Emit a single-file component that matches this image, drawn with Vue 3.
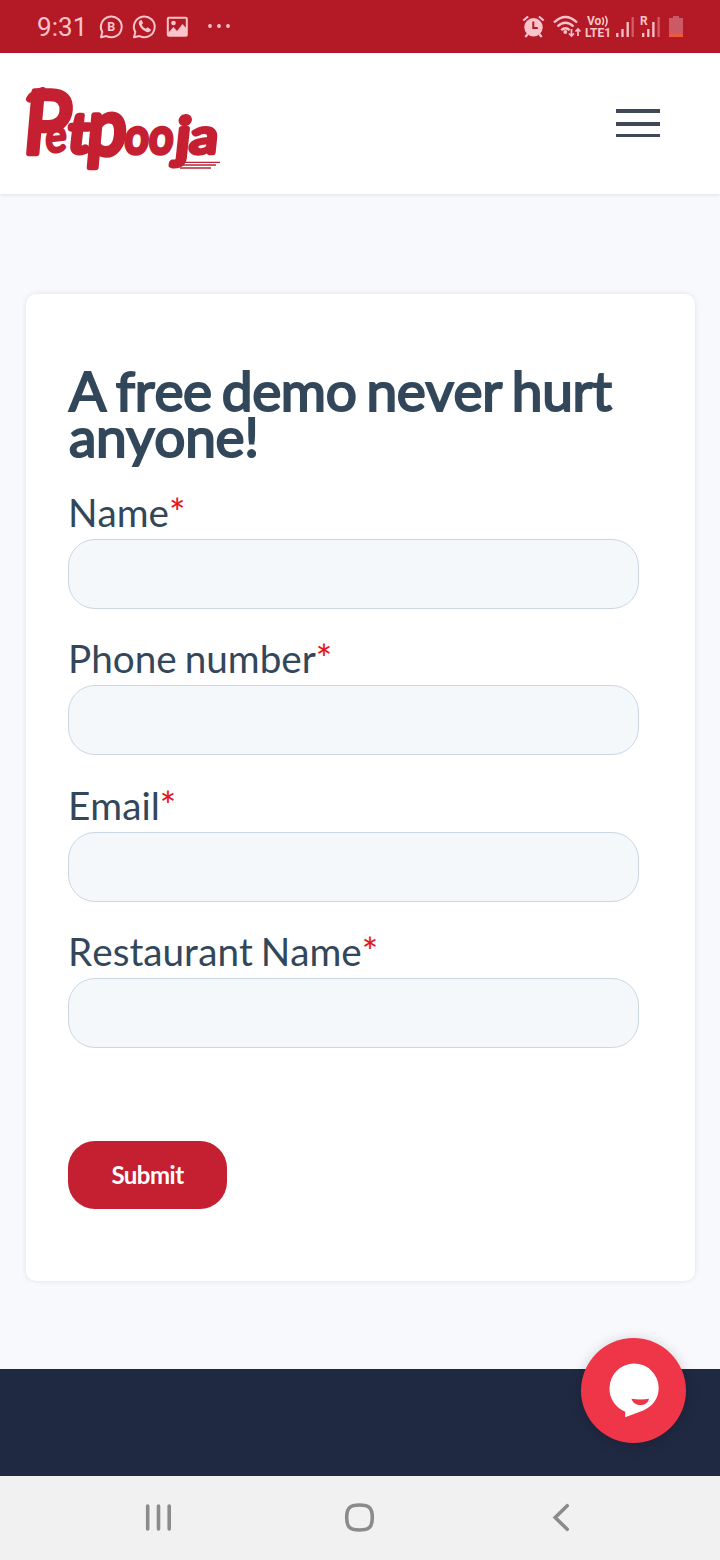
<script setup>
const fields = [
  { id: 'name', label: 'Name', type: 'text' },
  { id: 'phone', label: 'Phone number', type: 'tel' },
  { id: 'email', label: 'Email', type: 'email' },
  { id: 'restaurant', label: 'Restaurant Name', type: 'text' },
]
</script>

<template>
  <div class="screen">
    <div class="status">
      <span class="time">9:31</span>
      <svg class="status-left" width="140" height="53" viewBox="96 0 140 53" fill="none" stroke="#fbc3ca" stroke-width="2">
        <path d="M101 37.300l1.300-5.200a10.400 10.400 0 1 1 4.200 4Z" stroke-linejoin="round" />
        <text x="111.300" y="31.200" class="biz">B</text>
        <path d="M134 37.300l1.300-5.200a10.400 10.400 0 1 1 4.200 4Z" stroke-linejoin="round" />
        <path d="M140.300 20.300c-1.800 1-2 3.200-.8 5.300 1.700 3.200 4 5.300 7 6.300 2 .7 4-.2 4.600-2.200l-3.600-2.400-1.700 1.500c-1.800-.8-3.200-2.200-4.100-4l1.400-1.600-1.500-3.200z" fill="#fbc3ca" stroke="none" />
        <rect x="167.800" y="17.800" width="19" height="18" rx="1" />
        <path d="M168 33l5.500-6 3.500 4 5.500-7 4.500 5v7h-19z" fill="#fbc3ca" stroke="none" />
        <circle cx="173.500" cy="23" r="2.300" fill="#fbc3ca" stroke="none" />
        <g fill="#fbc3ca" stroke="none"><circle cx="210" cy="26" r="1.900" /><circle cx="219" cy="26" r="1.900" /><circle cx="228" cy="26" r="1.900" /></g>
      </svg>
      <svg class="status-right" width="170" height="53" viewBox="518 0 170 53" fill="none" stroke="#fbc3ca" stroke-width="2">
        <circle cx="533.500" cy="27.200" r="9.200" fill="#fbc3ca" stroke="none" />
        <path d="M523.300 20.500l4.800-4M543.700 20.500l-4.800-4M527.800 34l-2.500 3M539.200 34l2.500 3" stroke-width="2.200" />
        <path d="M533.300 21.500v6.500h4.500" stroke="#b41926" />
        <path d="M554 22.500q11.500-11 23 0M557.500 26.500q8-7.500 16 0M561.200 30.200q4.300-4 8.500 0" stroke-width="2.300" />
        <circle cx="565.300" cy="32" r="1.900" fill="#fbc3ca" stroke="none" />
        <path d="M571.500 29v7M569 33.500l2.500 2.500 2.500-2.500M578 36v-7M575.500 31.500l2.500-2.500 2.500 2.500" stroke-width="1.700" />
        <text x="587" y="24.800" class="net">Vo</text>
        <path d="M602.300 17.500q2.500 3.500 0 7.500M605.200 16q3.800 5 0 10.500" stroke-width="1.600" />
        <text x="585" y="37" class="net" textLength="26" lengthAdjust="spacingAndGlyphs">LTE1</text>
        <g stroke-width="2.300">
          <path d="M617.300 37v-4M622.500 37v-8M627.700 37V22" /><path d="M632.700 37V17" opacity=".4" />
          <path d="M643.200 37v-4M648.300 37v-8M653.400 37V22" /><path d="M658.600 37V17" opacity=".4" />
        </g>
        <text x="640" y="25" class="net">R</text>
        <path d="M669 18h4v-2h6v2h4v17h-14z" fill="#cb5966" stroke="none" />
        <path d="M669 34h14v3h-14z" fill="#f0583c" stroke="none" />
      </svg>
    </div>

    <header class="header">
      <svg class="logo" width="202" height="92" viewBox="22 83 202 92" role="img" aria-label="Petpooja">
        <g class="wordmark">
          <text class="cap" transform="translate(22 152.500) skewX(-5) scale(.9 1)">P</text>
          <text class="e" transform="translate(45.500 152.500) skewX(-6) rotate(-6) scale(.86 1)">e</text>
          <text class="t" transform="translate(67 152) skewX(-6) scale(1.050 1)">t</text>
          <text class="p" transform="translate(86 154) skewX(-5) scale(.9 1)">p</text>
          <text class="o" transform="translate(124 152.500) skewX(-4) scale(.87 1)">o</text>
          <text class="o" transform="translate(148.500 152.500) skewX(-4) scale(.87 1)">o</text>
          <text class="j" transform="translate(174.500 156) skewX(-6) scale(1.080 1)">j</text>
          <text class="a" transform="translate(188.500 152.500) skewX(-6) scale(1.180 1)">a</text>
        </g>
        <path d="M43 90.500Q33 93 29.500 99" fill="none" stroke="#c42032" stroke-width="7" stroke-linecap="round" />
        <path d="M182 162.300h38M181 165h35M180 168h31" stroke="#b62634" stroke-width="1.300" />
      </svg>
      <button class="menu" aria-label="Menu"><i></i><i></i><i></i></button>
    </header>

    <main class="main">
      <form class="card" @submit.prevent>
        <h1>A free demo never hurt<br>anyone!</h1>
        <div v-for="f in fields" :key="f.id" class="field">
          <label :for="f.id">{{ f.label }}<span>*</span></label>
          <input :id="f.id" :type="f.type">
        </div>
        <button class="submit" type="submit">Submit</button>
      </form>
    </main>

    <footer class="footer"></footer>

    <nav class="nav">
      <svg width="720" height="84" viewBox="0 1476 720 84" fill="none" stroke="#8b8b8b" stroke-width="3.600" stroke-linecap="round">
        <path d="M147.700 1506v23M158.500 1506v23M169.200 1506v23" />
        <path d="M359.500 1505c9.800 0 12.800 3 12.800 12.500s-3 12.500-12.800 12.500-12.800-3-12.800-12.500 3-12.500 12.800-12.500z" />
        <path d="M567.200 1505.700l-12 11.800 12 11.800" />
      </svg>
    </nav>

    <button class="chat" aria-label="Chat">
      <svg width="105" height="105" viewBox="581 1338 105 105">
        <path d="M634 1363.500a24.600 24.600 0 0 1 24.700 24.500c0 10.500-6.500 18.500-15.500 22.500l-18 6.800v-5.600a24.600 24.600 0 0 1-15.700-23.700 24.600 24.600 0 0 1 24.500-24.500z" fill="#fff" />
        <path d="M631.500 1398.700q9 1.500 17.500 0c-1.800 8.500-15 8.500-17.500 0z" fill="#ef3649" />
      </svg>
    </button>
  </div>
</template>

<style>
body { margin: 0; }
</style>

<style scoped>
.screen {
  position: relative;
  display: flex;
  flex-direction: column;
  width: 720px;
  height: 1560px;
  overflow: hidden;
  background: #f8f9fd;
  font-family: Lato, "Liberation Sans", sans-serif;
  color: #33475b;
}
button { padding: 0; border: 0; font-family: inherit; }
.status {
  display: flex;
  align-items: center;
  height: 53px;
  flex: none;
  padding: 0 32px 0 37px;
  background: #b41926;
}
.time { width: 59px; padding-top: 2px; font: 400 26px/51px Roboto, sans-serif; color: #fbc3ca; letter-spacing: .1px; }
.status-right { margin-left: auto; }
.biz { font: 700 12.500px Roboto, sans-serif; text-anchor: middle; fill: #fbc3ca; stroke: none; }
.net { font: 700 12px Roboto, sans-serif; fill: #fbc3ca; stroke: none; }
.header {
  display: flex;
  align-items: flex-start;
  justify-content: space-between;
  height: 141px;
  flex: none;
  box-sizing: border-box;
  padding: 30px 60px 0 22px;
  background: #fff;
  box-shadow: 0 1px 4px rgba(40, 50, 80, .12);
}
.logo { overflow: visible; }
.wordmark {
  font-family: Lato, sans-serif;
  font-weight: 400;
  fill: #c42032;
  stroke: #c42032;
  stroke-width: 5px;
  stroke-linejoin: round;
}
.cap { font-size: 86px; stroke-width: 6.500px; }
.e { font-size: 46px; stroke-width: 3.500px; }
.t { font-size: 54px; stroke-width: 6px; }
.p { font-size: 76px; stroke-width: 6.500px; }
.o { font-size: 48px; }
.j { font-size: 54px; stroke-width: 5.500px; }
.a { font-size: 48px; stroke-width: 4.500px; }
.menu { display: grid; grid-template-rows: 4px 4px 3px; row-gap: 8.500px; width: 44px; margin-top: 26px; background: none; }
.menu i { background: #3f4856; }
.main { height: 1175px; flex: none; box-sizing: border-box; padding: 100px 25px 0 26px; }
.card {
  height: 987px;
  box-sizing: border-box;
  padding: 73px 56px 0 42px;
  border-radius: 10px;
  background: #fff;
  box-shadow: 0 0 5px rgba(40, 50, 80, .12);
}
h1 {
  height: 124px;
  margin: 0;
  padding-left: 1px;
  font-size: 55px;
  font-weight: 400;
  font-kerning: none;
  line-height: 46px;
  letter-spacing: -.35px;
  word-spacing: -3.800px;
  white-space: nowrap;
  -webkit-text-stroke: 2.100px #33475b;
}
.field { height: 146.400px; }
label { display: block; height: 48px; font-size: 38.700px; line-height: 42px; word-spacing: -2px; font-kerning: none; }
label span { color: #e51520; -webkit-text-stroke: .1px #e51520; }
input {
  display: block;
  width: 571px;
  height: 70px;
  box-sizing: border-box;
  border: 1px solid #cbd6e2;
  border-radius: 27px;
  background: #f4f8fb;
}
.submit {
  display: block;
  width: 159px;
  height: 68px;
  margin-top: 64px;
  border-radius: 27px;
  background: #c42032;
  color: #fff;
  font-size: 24px;
  font-weight: 700;
  letter-spacing: -.5px;
}
.footer { height: 107px; flex: none; background: #202942; }
.nav { height: 84px; flex: none; background: #f1f1f1; }
.chat {
  position: absolute;
  left: 581px;
  top: 1338px;
  width: 105px;
  height: 105px;
  border-radius: 50%;
  background: #ef3649;
  box-shadow: 0 2px 14px rgba(0, 0, 0, .18);
}
svg { display: block; }
</style>
